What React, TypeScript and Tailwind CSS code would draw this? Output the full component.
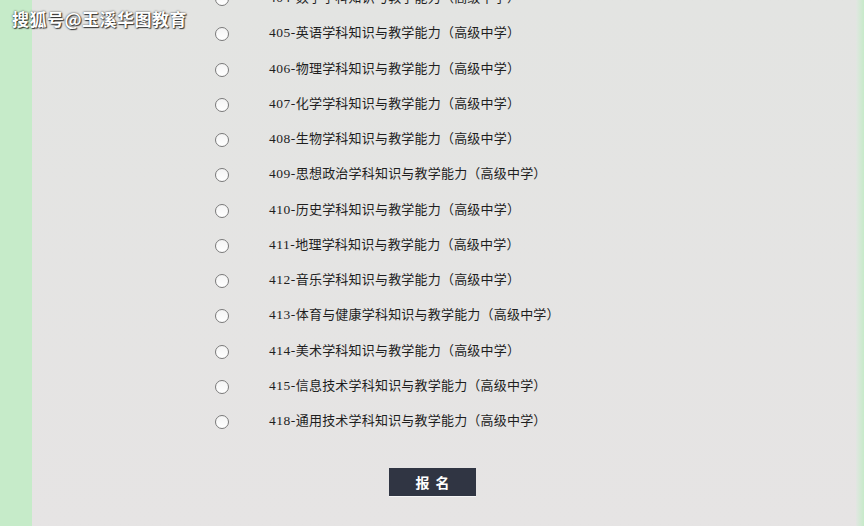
import { useState } from "react";

const subjects = [
  ["404", "数学学科知识与教学能力（高级中学）"],
  ["405", "英语学科知识与教学能力（高级中学）"],
  ["406", "物理学科知识与教学能力（高级中学）"],
  ["407", "化学学科知识与教学能力（高级中学）"],
  ["408", "生物学科知识与教学能力（高级中学）"],
  ["409", "思想政治学科知识与教学能力（高级中学）"],
  ["410", "历史学科知识与教学能力（高级中学）"],
  ["411", "地理学科知识与教学能力（高级中学）"],
  ["412", "音乐学科知识与教学能力（高级中学）"],
  ["413", "体育与健康学科知识与教学能力（高级中学）"],
  ["414", "美术学科知识与教学能力（高级中学）"],
  ["415", "信息技术学科知识与教学能力（高级中学）"],
  ["418", "通用技术学科知识与教学能力（高级中学）"],
];

export default function App() {
  const [picked, setPicked] = useState<string | null>(null);

  return (
    <div className="relative flex h-[526px] w-[864px] overflow-hidden bg-[#c6ebc9]">
      {/* watermark */}
      <div className="absolute left-[12px] top-[6px] z-10 text-[17px] font-bold tracking-[0.5px] text-white [font-family:'Noto_Sans_CJK_SC',sans-serif] [text-shadow:0_0_2px_rgba(0,0,0,0.8),1px_1px_1px_rgba(0,0,0,0.7)]">
        搜狐号@玉溪华图教育
      </div>

      <div className="ml-[32px] flex w-[824px] flex-col bg-gradient-to-b from-[#e3e4e2] to-[#e6e4e4]">
        <div className="-mt-[20px] flex flex-col pl-[183px]">
          {subjects.map(([code, name]) => (
            <label key={code} className="flex h-[35.25px] cursor-pointer items-center" onClick={() => setPicked(code)}>
              <span className="mt-[3px] flex h-[14px] w-[14px] items-center justify-center rounded-full border border-[#7a7a7a] bg-gradient-to-b from-[#f4f4f4] to-white">
                {picked === code && <span className="h-[6px] w-[6px] rounded-full bg-[#333]" />}
              </span>
              <span className="ml-[40px] flex items-baseline text-[#1e1e1e]">
                <span className="text-[13.5px] tracking-[0.5px] [font-family:'Liberation_Serif',serif]">{code}-</span>
                <span className="text-[13px] tracking-[0.2px] [font-family:'Noto_Sans_CJK_SC',sans-serif]">{name}</span>
              </span>
            </label>
          ))}
        </div>

        <div className="mt-[30px] flex pl-[357px]">
          <button className="flex h-[28px] w-[87px] items-center justify-center bg-[#303543] text-[14px] font-bold tracking-[6px] text-white [font-family:'Noto_Sans_CJK_SC',sans-serif] shadow-[0_1px_0_#f5f5f5]">
            <span className="ml-[6px]">报名</span>
          </button>
        </div>
      </div>

      <div className="flex-1 bg-gradient-to-r from-[#e2e6e2] to-[#c6ebc9]" />
    </div>
  );
}
